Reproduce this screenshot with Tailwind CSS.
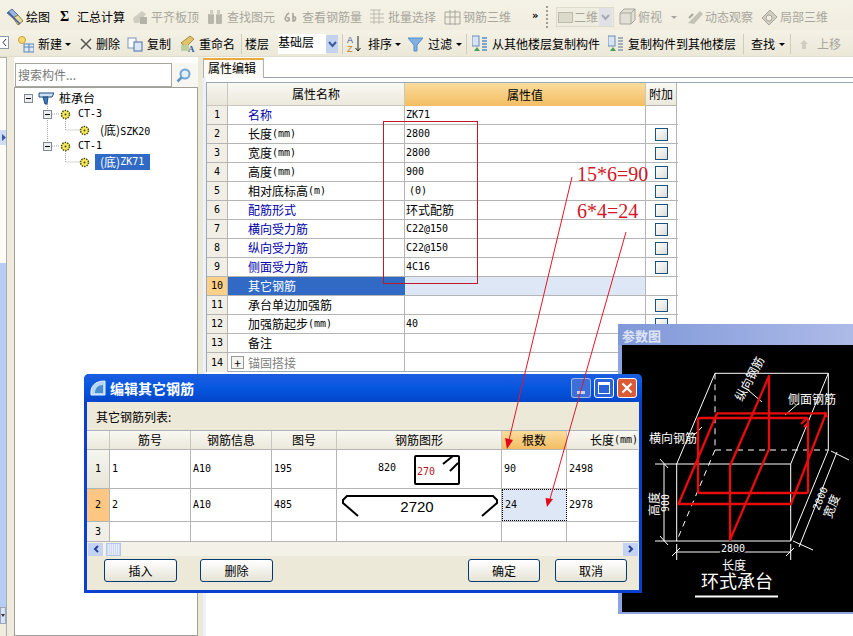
<!DOCTYPE html>
<html lang="zh">
<head>
<meta charset="utf-8">
<title>属性编辑</title>
<script src="https://cdn.jsdelivr.net/npm/@tailwindcss/browser@4"></script>
</head>
<body class="bg-white">
<div class="relative w-[853px] h-[636px] overflow-hidden bg-white text-[12px] leading-none text-black font-['Noto_Sans_CJK_SC',sans-serif] flex flex-col">

  <!-- toolbar 1 -->
  <div class="h-[30px] shrink-0 flex items-center bg-gradient-to-b from-[#f4f2e6] to-[#f1eee0] pt-[4px] whitespace-nowrap">
    <svg class="ml-[5px] w-[20px] h-[20px]" viewBox="0 0 20 20"><path d="M2 6l5-4 6 6-4 4z" fill="#9bb5dc" stroke="#56709c"/><path d="M8 11l5-3 5 6-5 4z" fill="#e8d9a0" stroke="#8a8050"/><path d="M3 5l12 12" stroke="#3d5c94" stroke-width="1.5"/></svg>
    <span class="ml-[1px] w-[24px]">绘图</span>
    <span class="ml-[10px] w-[10px] font-bold font-['Liberation_Serif',serif] text-[14px]">Σ</span>
    <span class="ml-[7px] w-[48px]">汇总计算</span>
    <svg class="ml-[7px] w-[16px] h-[16px]" viewBox="0 0 16 16"><path d="M1 9l9-7 4 3-7 9H2z" fill="#cfcdc2"/><rect x="8" y="8" width="7" height="7" fill="#b5b3a8"/></svg>
    <span class="ml-[3px] w-[48px] text-[#a8a69c]">平齐板顶</span>
    <svg class="ml-[8px] w-[16px] h-[16px]" viewBox="0 0 16 16"><rect x="1" y="5" width="6" height="10" rx="1" fill="#b9b7ac"/><rect x="9" y="5" width="6" height="10" rx="1" fill="#b9b7ac"/><rect x="3" y="1" width="3" height="5" fill="#cfcdc2"/><rect x="10" y="1" width="3" height="5" fill="#cfcdc2"/></svg>
    <span class="ml-[4px] w-[48px] text-[#a8a69c]">查找图元</span>
    <svg class="ml-[8px] w-[16px] h-[16px]" viewBox="0 0 16 16"><path d="M6 4C2 6 1 12 4 12s3-4 0-3M10 4v8c3 0 4-5 0-4" fill="none" stroke="#a8a69c" stroke-width="1.6"/></svg>
    <span class="ml-[3px] w-[60px] text-[#a8a69c]">查看钢筋量</span>
    <svg class="ml-[7px] w-[17px] h-[18px]" viewBox="0 0 17 18" fill="none" stroke="#bcbab0"><path d="M1 2h11M1 6h14M1 10h14M1 14h14M5 2v14M10 2v14"/></svg>
    <span class="ml-[2px] w-[48px] text-[#a8a69c]">批量选择</span>
    <svg class="ml-[8px] w-[17px] h-[17px]" viewBox="0 0 17 17" fill="none" stroke="#a8a69c"><path d="M1 3h15v12H1zM6 1v15M11 1v15M1 8h15"/></svg>
    <span class="ml-[2px] w-[48px] text-[#a8a69c]">钢筋三维</span>
    <span class="ml-[21px] w-[8px] font-bold text-[10px] font-['DejaVu_Sans',sans-serif] -mt-[3px]">»</span>
    <span class="ml-[6px] h-[22px] border-l-2 border-dotted border-[#a09e90]"></span>
    <div class="ml-[8px] w-[58px] h-[20px] flex items-center bg-[#efece0] border border-[#dedbcd]">
      <span class="ml-[1px] w-[15px] h-[11px] bg-[#dcdacb] border border-[#bcbaa9]"></span>
      <span class="ml-[1px] w-[25px] text-[#a8a69c]">二维</span>
      <span class="w-[13px] h-[18px] bg-[#dfe1e6] flex items-center justify-center"><svg class="w-[9px] h-[7px]" viewBox="0 0 9 7" fill="none" stroke="#a5a9b5" stroke-width="2"><path d="M1 1l3.5 4L8 1"/></svg></span>
    </div>
    <svg class="ml-[5px] w-[17px] h-[18px]" viewBox="0 0 17 18"><path d="M1 5l4-4h11v11l-4 4H1z" fill="#e2e0d4" stroke="#a8a69c"/><path d="M1 5h11v11M12 5l4-4" fill="none" stroke="#a8a69c"/></svg>
    <span class="ml-[2px] w-[28px] text-[#a8a69c]">俯视</span>
    <span class="ml-[5px] w-0 h-0 border-x-[3px] border-x-transparent border-t-[3px] border-t-[#a8a69c]"></span>
    <svg class="ml-[9px] w-[18px] h-[18px]" viewBox="0 0 18 18"><path d="M2 15L14 3l3 3-9 10z" fill="#c4c2b5"/><path d="M3 10l4-4" stroke="#a8a69c" stroke-width="2"/></svg>
    <span class="ml-[1px] w-[48px] text-[#a8a69c]">动态观察</span>
    <svg class="ml-[8px] w-[17px] h-[17px]" viewBox="0 0 17 17"><path d="M1 9l8-8 7 7-8 8z" fill="#d0cebf" stroke="#a8a69c"/><circle cx="8" cy="9" r="3" fill="#f0eee2" stroke="#a8a69c"/></svg>
    <span class="ml-[2px] w-[48px] text-[#a8a69c]">局部三维</span>
  </div>

  <!-- toolbar 2 -->
  <div class="h-[27px] shrink-0 flex items-center bg-gradient-to-b from-[#f4f2e6] to-[#ebe8d8] pt-[2px] whitespace-nowrap border-b border-[#e0ddcc]">
    <span class="w-[9px] h-[13px] -mt-[3px] bg-white border-y border-r border-[#8f9aa8] flex items-center justify-center"><svg class="w-[5px] h-[9px]" viewBox="0 0 5 9" fill="none" stroke="#333"><path d="M4 1L1 4.500 4 8"/></svg></span>
    <svg class="ml-[9px] w-[16px] h-[17px]" viewBox="0 0 16 17"><circle cx="4" cy="4" r="3.500" fill="#f7d86a" stroke="#c7a23a"/><rect x="6" y="8" width="10" height="8" fill="#dfe9f5" stroke="#5b86b8"/><path d="M6 11h10M11 8v8" stroke="#5b86b8"/></svg>
    <span class="ml-[4px] w-[24px]">新建</span>
    <span class="ml-[3px] w-0 h-0 border-x-[3px] border-x-transparent border-t-[3px] border-t-black"></span>
    <svg class="ml-[9px] w-[12px] h-[12px]" viewBox="0 0 12 12" fill="none" stroke="#555" stroke-width="1.500"><path d="M1 1l10 10M11 1L1 11"/></svg>
    <span class="ml-[4px] w-[24px]">删除</span>
    <svg class="ml-[7px] w-[16px] h-[15px]" viewBox="0 0 16 15"><rect x="1" y="1" width="8" height="10" fill="#fff" stroke="#7c94b8"/><rect x="7" y="5" width="8" height="9" fill="#dce7f6" stroke="#4a70a8"/></svg>
    <span class="ml-[4px] w-[24px]">复制</span>
    <svg class="ml-[9px] w-[16px] h-[18px]" viewBox="0 0 16 18"><path d="M1 8l9-7 4 3-8 8z" fill="#e3c36a" stroke="#a89048"/><path d="M1 16V10h8v6z" fill="#bcd0a0"/><text x="8" y="17" font-size="9" fill="#34609c" font-family="Liberation Serif" font-weight="700">A</text></svg>
    <span class="ml-[3px] w-[36px]">重命名</span>
    <span class="ml-[6px] w-px h-[20px] bg-[#cfccba]"></span>
    <span class="ml-[3px] w-[24px]">楼层</span>
    <div class="ml-[9px] flex items-center w-[60px] h-[20px]">
      <span class="w-[48px] h-[20px] bg-white pt-[2px] -mt-[1px]">基础层</span>
      <span class="w-[12px] h-[18px] bg-[#c3d3f1] flex items-center justify-center"><svg class="w-[9px] h-[7px]" viewBox="0 0 9 7" fill="none" stroke="#3a5aa0" stroke-width="2"><path d="M1 1l3.500 4L8 1"/></svg></span>
    </div>
    <span class="ml-[4px] w-px h-[20px] bg-[#cfccba]"></span>
    <svg class="ml-[4px] w-[16px] h-[18px]" viewBox="0 0 16 18"><text x="0" y="8" font-size="9" fill="#3a5aa0" font-family="Liberation Sans">A</text><text x="0" y="17" font-size="9" fill="#c08030" font-family="Liberation Sans">Z</text><path d="M11 1v15M8.500 13l2.500 3 2.500-3" fill="none" stroke="#222"/></svg>
    <span class="ml-[5px] w-[24px]">排序</span>
    <span class="ml-[3px] w-0 h-0 border-x-[3px] border-x-transparent border-t-[3px] border-t-black"></span>
    <svg class="ml-[7px] w-[15px] h-[15px]" viewBox="0 0 15 15"><path d="M0 1h15L9 8v6H6V8z" fill="#7eb2e6" stroke="#5a8cc2"/></svg>
    <span class="ml-[5px] w-[24px]">过滤</span>
    <span class="ml-[4px] w-0 h-0 border-x-[3px] border-x-transparent border-t-[3px] border-t-black"></span>
    <span class="ml-[4px] w-px h-[20px] bg-[#cfccba]"></span>
    <svg class="ml-[5px] w-[16px] h-[18px]" viewBox="0 0 16 18"><rect x="0" y="1" width="7" height="10" fill="#d8e4f4" stroke="#6a8cbc"/><path d="M2 16l3-4 3 4z" fill="#4aa050"/><path d="M10 3h5M10 6h5M10 9h5M10 12h5M10 15h5" stroke="#5a8cc8" stroke-width="1.500"/></svg>
    <span class="ml-[4px] w-[108px]">从其他楼层复制构件</span>
    <svg class="ml-[8px] w-[16px] h-[18px]" viewBox="0 0 16 18"><rect x="0" y="1" width="7" height="10" fill="#d8e4f4" stroke="#6a8cbc"/><path d="M2 16l3-4 3 4z" fill="#4aa050"/><path d="M10 3h5M10 6h5M10 9h5M10 12h5M10 15h5" stroke="#8a9cb0" stroke-width="1.500"/></svg>
    <span class="ml-[4px] w-[108px]">复制构件到其他楼层</span>
    <span class="ml-[7px] w-px h-[20px] bg-[#cfccba]"></span>
    <span class="ml-[7px] w-[24px]">查找</span>
    <span class="ml-[4px] w-0 h-0 border-x-[3px] border-x-transparent border-t-[3px] border-t-black"></span>
    <span class="ml-[5px] w-px h-[20px] bg-[#cfccba]"></span>
    <svg class="ml-[9px] w-[8px] h-[9px]" viewBox="0 0 8 9"><path d="M4 0l4 4H6v5H2V4H0z" fill="#cfcdc2"/></svg>
    <span class="ml-[9px] w-[24px] text-[#a8a69c]">上移</span>
  </div>

  <!-- body -->
  <div class="flex-1 flex min-h-0">
    <!-- far-left strip -->
    <div class="w-[14px] shrink-0 flex relative bg-[#efecdd]">
      <div class="w-[7px] flex flex-col border-r border-[#a9adb0] bg-[#fdfcf6]">
        <div class="h-[73px] border-t border-[#b8b6a8]"></div>
        <div class="h-[15px] bg-[#cfdcf7] flex items-center justify-end"><svg class="w-[4px] h-[7px]" viewBox="0 0 4 7"><path d="M0 0l4 3.500L0 7z" fill="#3a5aa0"/></svg></div>
        <div class="h-[118px]"></div>
        <div class="flex-1 bg-[#b8cdf3]"></div>
        <div class="h-[17px] bg-[#d9e3f6] border border-[#9aa6bb] flex items-center justify-center"><span class="w-0 h-0 border-x-[2px] border-x-transparent border-t-[3px] border-t-[#333]"></span></div>
        <div class="h-[12px] bg-[#efecdd]"></div>
      </div>
    </div>

    <!-- left panel -->
    <div class="w-[184px] shrink-0 flex flex-col pt-[6px]">
      <div class="h-[24px] flex shrink-0">
        <div class="ml-[1px] w-[157px] h-[24px] bg-white border border-[#a7a7a0] flex items-center pl-[2px] text-[#777]">搜索构件...</div>
        <div class="flex-1 flex items-center justify-center bg-[#f7f6f0] pr-[3px]"><svg class="w-[15px] h-[15px]" viewBox="0 0 15 15"><circle cx="9" cy="6" r="4.500" fill="#e4effa" stroke="#6ea5d8" stroke-width="2"/><path d="M5.500 9.500L1.500 13.500" stroke="#5e96cc" stroke-width="2.500"/></svg></div>
      </div>
      <div class="relative flex-1 border border-[#a0a09a] bg-white pt-[2px]">
        <svg class="absolute left-0 top-0 w-[90px] h-[90px]" viewBox="0 0 90 90" fill="none" stroke="#a8a8a8" stroke-dasharray="1 1"><path d="M32.500 16V54M37 26h8M37 58h8M50.500 31v11h14M50.500 63v11h14"/></svg>
        <div class="relative h-[16px] flex items-center whitespace-nowrap">
          <span class="ml-[9px] w-[9px] h-[9px] border border-[#7f8a94] bg-[#eee] flex items-center justify-center"><span class="w-[5px] h-px bg-black"></span></span>
          <svg class="ml-[5px] w-[16px] h-[16px]" viewBox="0 0 16 16"><path d="M1 3h15l-2 4H1z" fill="#cfe0f4" stroke="#1f4d80"/><path d="M5 7h5l-1 7H7z" fill="#3c7cc0" stroke="#1f4d80"/></svg>
          <span class="ml-[5px]">桩承台</span>
        </div>
        <div class="relative h-[16px] flex items-center whitespace-nowrap">
          <span class="ml-[28px] w-[9px] h-[9px] border border-[#7f8a94] bg-[#eee] flex items-center justify-center"><span class="w-[5px] h-px bg-black"></span></span>
          <svg class="ml-[8px] w-[11px] h-[11px]" viewBox="0 0 11 11"><circle cx="5.500" cy="5.500" r="4" fill="#f5e85a" stroke="#4a4a10" stroke-width="1.500" stroke-dasharray="1.500 1"/><circle cx="5.500" cy="5.500" r="1" fill="#4a4a10"/></svg>
          <span class="ml-[7px] text-[10px] font-['DejaVu_Sans_Mono',monospace]">CT-3</span>
        </div>
        <div class="relative h-[16px] flex items-center whitespace-nowrap">
          <svg class="ml-[64px] w-[11px] h-[11px]" viewBox="0 0 11 11"><circle cx="5.500" cy="5.500" r="4" fill="#f5e85a" stroke="#4a4a10" stroke-width="1.500" stroke-dasharray="1.500 1"/><circle cx="5.500" cy="5.500" r="1" fill="#4a4a10"/></svg>
          <span class="ml-[10px]">(底)<span class="text-[10px] font-['DejaVu_Sans_Mono',monospace]">SZK20</span></span>
        </div>
        <div class="relative h-[16px] flex items-center whitespace-nowrap">
          <span class="ml-[28px] w-[9px] h-[9px] border border-[#7f8a94] bg-[#eee] flex items-center justify-center"><span class="w-[5px] h-px bg-black"></span></span>
          <svg class="ml-[8px] w-[11px] h-[11px]" viewBox="0 0 11 11"><circle cx="5.500" cy="5.500" r="4" fill="#f5e85a" stroke="#4a4a10" stroke-width="1.500" stroke-dasharray="1.500 1"/><circle cx="5.500" cy="5.500" r="1" fill="#4a4a10"/></svg>
          <span class="ml-[7px] text-[10px] font-['DejaVu_Sans_Mono',monospace]">CT-1</span>
        </div>
        <div class="relative h-[16px] flex items-center whitespace-nowrap">
          <svg class="ml-[64px] w-[11px] h-[11px]" viewBox="0 0 11 11"><circle cx="5.500" cy="5.500" r="4" fill="#f5e85a" stroke="#4a4a10" stroke-width="1.500" stroke-dasharray="1.500 1"/><circle cx="5.500" cy="5.500" r="1" fill="#4a4a10"/></svg>
          <span class="ml-[5px] w-[55px] h-[16px] pl-[5px] bg-[#316ac5] text-white flex items-center">(底)<span class="text-[10px] font-['DejaVu_Sans_Mono',monospace]">ZK71</span></span>
        </div>
      </div>
    </div>

    <!-- splitter -->
    <div class="w-[8px] shrink-0 bg-[#ece9d8] border-r-[3px] border-r-[#eef1fa]"></div>

    <!-- main -->
    <div class="flex-1 min-w-0 flex flex-col">
      <div class="h-[25px] shrink-0 flex items-start pt-[1px] bg-white">
        <div class="w-[61px] h-[20px] -ml-[3px] border-t-2 border-t-[#eaa93e] border-x border-x-[#aab2ba] bg-[#faf9f3] pl-[4px] pt-[2px] text-[12px]">属性编辑</div>
        <div class="flex-1 h-[20px] border-b border-[#9aa3ad]"></div>
      </div>
      <div class="h-[290px] shrink-0 border-t border-l border-b border-[#9aa9b8]">
        <div class="w-[471px]">
          <!-- header -->
          <div class="flex h-[23px]">
            <div class="w-[21px] border-r border-b border-[#c8c8c0] bg-gradient-to-b from-[#f7f6ef] to-[#e9e6d9]"></div>
            <div class="w-[177px] border-r border-b border-[#c8c8c0] bg-gradient-to-b from-[#faf9f3] to-[#ece9dc] flex items-center justify-center">属性名称</div>
            <div class="w-[241px] border-r border-[#c8c8c0] bg-gradient-to-b from-[#fbdc9c] to-[#f3bd62] flex items-center justify-center">属性值</div>
            <div class="w-[31px] border-r border-b border-[#b5b5b5] bg-gradient-to-b from-[#faf9f3] to-[#ece9dc] flex items-center justify-center">附加</div>
          </div>
          <!-- rows -->
          <div class="flex h-[19px] border-b border-[#b5b5b5]"><div class="w-[21px] border-r border-[#b5b5b5] bg-[#f1efe5] flex items-center justify-center text-[10px] font-['DejaVu_Sans_Mono',monospace]">1</div><div class="w-[177px] border-r border-[#b5b5b5] pl-[20px] flex items-center text-[#0000a8]">名称</div><div class="w-[241px] border-r border-[#b5b5b5] pl-[1px] flex items-center text-[10px] font-['DejaVu_Sans_Mono',monospace]">ZK71</div><div class="w-[31px] border-r border-[#b5b5b5]"></div></div>
          <div class="flex h-[19px] border-b border-[#b5b5b5]"><div class="w-[21px] border-r border-[#b5b5b5] bg-[#f1efe5] flex items-center justify-center text-[10px] font-['DejaVu_Sans_Mono',monospace]">2</div><div class="w-[177px] border-r border-[#b5b5b5] pl-[20px] flex items-center">长度<span class="text-[10px] font-['DejaVu_Sans_Mono',monospace]">(mm)</span></div><div class="w-[241px] border-r border-[#b5b5b5] pl-[1px] flex items-center text-[10px] font-['DejaVu_Sans_Mono',monospace]">2800</div><div class="w-[31px] border-r border-[#b5b5b5] flex items-center justify-center"><span class="w-[13px] h-[13px] border border-[#1c5180] bg-gradient-to-br from-white to-[#dcdcd7]"></span></div></div>
          <div class="flex h-[19px] border-b border-[#b5b5b5]"><div class="w-[21px] border-r border-[#b5b5b5] bg-[#f1efe5] flex items-center justify-center text-[10px] font-['DejaVu_Sans_Mono',monospace]">3</div><div class="w-[177px] border-r border-[#b5b5b5] pl-[20px] flex items-center">宽度<span class="text-[10px] font-['DejaVu_Sans_Mono',monospace]">(mm)</span></div><div class="w-[241px] border-r border-[#b5b5b5] pl-[1px] flex items-center text-[10px] font-['DejaVu_Sans_Mono',monospace]">2800</div><div class="w-[31px] border-r border-[#b5b5b5] flex items-center justify-center"><span class="w-[13px] h-[13px] border border-[#1c5180] bg-gradient-to-br from-white to-[#dcdcd7]"></span></div></div>
          <div class="flex h-[19px] border-b border-[#b5b5b5]"><div class="w-[21px] border-r border-[#b5b5b5] bg-[#f1efe5] flex items-center justify-center text-[10px] font-['DejaVu_Sans_Mono',monospace]">4</div><div class="w-[177px] border-r border-[#b5b5b5] pl-[20px] flex items-center">高度<span class="text-[10px] font-['DejaVu_Sans_Mono',monospace]">(mm)</span></div><div class="w-[241px] border-r border-[#b5b5b5] pl-[1px] flex items-center text-[10px] font-['DejaVu_Sans_Mono',monospace]">900</div><div class="w-[31px] border-r border-[#b5b5b5] flex items-center justify-center"><span class="w-[13px] h-[13px] border border-[#1c5180] bg-gradient-to-br from-white to-[#dcdcd7]"></span></div></div>
          <div class="flex h-[19px] border-b border-[#b5b5b5]"><div class="w-[21px] border-r border-[#b5b5b5] bg-[#f1efe5] flex items-center justify-center text-[10px] font-['DejaVu_Sans_Mono',monospace]">5</div><div class="w-[177px] border-r border-[#b5b5b5] pl-[20px] flex items-center">相对底标高<span class="text-[10px] font-['DejaVu_Sans_Mono',monospace]">(m)</span></div><div class="w-[241px] border-r border-[#b5b5b5] pl-[4px] flex items-center text-[10px] font-['DejaVu_Sans_Mono',monospace]">(0)</div><div class="w-[31px] border-r border-[#b5b5b5] flex items-center justify-center"><span class="w-[13px] h-[13px] border border-[#1c5180] bg-gradient-to-br from-white to-[#dcdcd7]"></span></div></div>
          <div class="flex h-[19px] border-b border-[#b5b5b5]"><div class="w-[21px] border-r border-[#b5b5b5] bg-[#f1efe5] flex items-center justify-center text-[10px] font-['DejaVu_Sans_Mono',monospace]">6</div><div class="w-[177px] border-r border-[#b5b5b5] pl-[20px] flex items-center text-[#0000a8]">配筋形式</div><div class="w-[241px] border-r border-[#b5b5b5] pl-[1px] flex items-center">环式配筋</div><div class="w-[31px] border-r border-[#b5b5b5] flex items-center justify-center"><span class="w-[13px] h-[13px] border border-[#1c5180] bg-gradient-to-br from-white to-[#dcdcd7]"></span></div></div>
          <div class="flex h-[19px] border-b border-[#b5b5b5]"><div class="w-[21px] border-r border-[#b5b5b5] bg-[#f1efe5] flex items-center justify-center text-[10px] font-['DejaVu_Sans_Mono',monospace]">7</div><div class="w-[177px] border-r border-[#b5b5b5] pl-[20px] flex items-center text-[#0000a8]">横向受力筋</div><div class="w-[241px] border-r border-[#b5b5b5] pl-[1px] flex items-center text-[10px] font-['DejaVu_Sans_Mono',monospace]">C22@150</div><div class="w-[31px] border-r border-[#b5b5b5] flex items-center justify-center"><span class="w-[13px] h-[13px] border border-[#1c5180] bg-gradient-to-br from-white to-[#dcdcd7]"></span></div></div>
          <div class="flex h-[19px] border-b border-[#b5b5b5]"><div class="w-[21px] border-r border-[#b5b5b5] bg-[#f1efe5] flex items-center justify-center text-[10px] font-['DejaVu_Sans_Mono',monospace]">8</div><div class="w-[177px] border-r border-[#b5b5b5] pl-[20px] flex items-center text-[#0000a8]">纵向受力筋</div><div class="w-[241px] border-r border-[#b5b5b5] pl-[1px] flex items-center text-[10px] font-['DejaVu_Sans_Mono',monospace]">C22@150</div><div class="w-[31px] border-r border-[#b5b5b5] flex items-center justify-center"><span class="w-[13px] h-[13px] border border-[#1c5180] bg-gradient-to-br from-white to-[#dcdcd7]"></span></div></div>
          <div class="flex h-[19px] border-b border-[#b5b5b5]"><div class="w-[21px] border-r border-[#b5b5b5] bg-[#f1efe5] flex items-center justify-center text-[10px] font-['DejaVu_Sans_Mono',monospace]">9</div><div class="w-[177px] border-r border-[#b5b5b5] pl-[20px] flex items-center text-[#0000a8]">侧面受力筋</div><div class="w-[241px] border-r border-[#b5b5b5] pl-[1px] flex items-center text-[10px] font-['DejaVu_Sans_Mono',monospace]">4C16</div><div class="w-[31px] border-r border-[#b5b5b5] flex items-center justify-center"><span class="w-[13px] h-[13px] border border-[#1c5180] bg-gradient-to-br from-white to-[#dcdcd7]"></span></div></div>
          <div class="flex h-[19px] border-b border-[#b5b5b5]"><div class="w-[21px] border-r border-[#b5b5b5] bg-[#fdd08a] flex items-center justify-center text-[10px] font-['DejaVu_Sans_Mono',monospace]">10</div><div class="w-[177px] border-r border-[#316ac5] bg-[#316ac5] text-white pl-[20px] flex items-center">其它钢筋</div><div class="w-[241px] border-r border-[#b5b5b5] bg-[#dde7f5]"></div><div class="w-[31px] border-r border-[#b5b5b5]"></div></div>
          <div class="flex h-[19px] border-b border-[#b5b5b5]"><div class="w-[21px] border-r border-[#b5b5b5] bg-[#f1efe5] flex items-center justify-center text-[10px] font-['DejaVu_Sans_Mono',monospace]">11</div><div class="w-[177px] border-r border-[#b5b5b5] pl-[20px] flex items-center">承台单边加强筋</div><div class="w-[241px] border-r border-[#b5b5b5]"></div><div class="w-[31px] border-r border-[#b5b5b5] flex items-center justify-center"><span class="w-[13px] h-[13px] border border-[#1c5180] bg-gradient-to-br from-white to-[#dcdcd7]"></span></div></div>
          <div class="flex h-[19px] border-b border-[#b5b5b5]"><div class="w-[21px] border-r border-[#b5b5b5] bg-[#f1efe5] flex items-center justify-center text-[10px] font-['DejaVu_Sans_Mono',monospace]">12</div><div class="w-[177px] border-r border-[#b5b5b5] pl-[20px] flex items-center">加强筋起步<span class="text-[10px] font-['DejaVu_Sans_Mono',monospace]">(mm)</span></div><div class="w-[241px] border-r border-[#b5b5b5] pl-[1px] flex items-center text-[10px] font-['DejaVu_Sans_Mono',monospace]">40</div><div class="w-[31px] border-r border-[#b5b5b5] flex items-center justify-center"><span class="w-[13px] h-[13px] border border-[#1c5180] bg-gradient-to-br from-white to-[#dcdcd7]"></span></div></div>
          <div class="flex h-[19px] border-b border-[#b5b5b5]"><div class="w-[21px] border-r border-[#b5b5b5] bg-[#f1efe5] flex items-center justify-center text-[10px] font-['DejaVu_Sans_Mono',monospace]">13</div><div class="w-[177px] border-r border-[#b5b5b5] pl-[20px] flex items-center">备注</div><div class="w-[241px] border-r border-[#b5b5b5]"></div><div class="w-[31px] border-r border-[#b5b5b5]"></div></div>
          <div class="flex h-[19px]"><div class="w-[21px] border-r border-[#b5b5b5] bg-[#f1efe5] flex items-center justify-center text-[10px] font-['DejaVu_Sans_Mono',monospace]">14</div><div class="w-[177px] border-r border-[#b5b5b5] pl-[3px] flex items-center text-[#808080]"><span class="w-[13px] h-[13px] mr-[4px] border border-[#999] text-black flex items-center justify-center text-[12px] bg-[#f5f5f0]">+</span>锚固搭接</div><div class="w-[241px] border-r border-[#b5b5b5]"></div><div class="w-[31px] border-r border-[#b5b5b5]"></div></div>
        </div>
      </div>
    </div>
  </div>

  <!-- annotation labels -->
  <div class="absolute left-[577px] top-[164px] text-[20px] text-[#d01828] font-['Liberation_Serif',serif]">15*6=90</div>
  <div class="absolute left-[577px] top-[201px] text-[20px] text-[#d01828] font-['Liberation_Serif',serif]">6*4=24</div>

  <!-- parameter diagram window -->
  <div class="absolute left-[618px] top-[324px] w-[240px] h-[290px] bg-[#8fa3de] flex flex-col">
    <div class="h-[21px] shrink-0 pl-[4px] pt-[2px] flex items-center text-[13px] font-bold text-[#dfe4f5] bg-gradient-to-r from-[#7f98d8] to-[#aebbe8]">参数图</div>
    <div class="ml-[4px] flex-1 bg-black mb-[2px]">
      <svg class="w-[236px] h-[267px]" viewBox="622 345 236 267">
        <g fill="none" stroke="#fff" stroke-width="1">
          <path d="M676.700 464h114v77h-114zM676.700 464L715 373.300h113.300L790.700 464M828.300 373.300v76.700L790.700 541"/>
          <path d="M715 373.300v76.700M715 450h113.300M715 450l-38.300 91" stroke-dasharray="6 5"/>
          <path d="M655 464h22M655 541h22M664 464v77M660 536l8 9M660 459l8 9"/>
          <path d="M676.700 544v16M790.700 544v16M676.700 552h114M672 556l8-8M786 556l8-8"/>
          <path d="M793 541l20 9M831 451l18 9M837 452l-38 95"/>
          <path d="M785 415l14-12M762 402l-14-12M702 427l-8 8"/>
        </g>
        <g fill="none" stroke="#e80c0c" stroke-width="2.300" stroke-linejoin="round">
          <rect x="698" y="418" width="110" height="75" rx="2"/>
          <path d="M717 413.300h109l-35 90.700H678.500z"/>
          <path d="M769 376v73l-39 91v-74z"/>
          <path d="M806 419l-5 5M808 423l-4 4M824 412l3 5"/>
        </g>
        <g fill="#fff" font-family="Noto Sans CJK SC, sans-serif" font-size="12">
          <text x="649" y="443">横向钢筋</text>
          <text x="788" y="404">侧面钢筋</text>
          <text transform="translate(742 402) rotate(-62)">纵向钢筋</text>
          <text transform="translate(659 516) rotate(-90)">高度</text>
          <text transform="translate(669 512) rotate(-90)" font-size="10" font-family="DejaVu Sans Mono, monospace">900</text>
          <text x="721" y="552" font-size="10" font-family="DejaVu Sans Mono, monospace" stroke="#000" stroke-width="3" paint-order="stroke">2800</text>
          <text x="722" y="570">长度</text>
          <text transform="translate(819 511) rotate(-68)" font-size="10" font-family="DejaVu Sans Mono, monospace">2800</text>
          <text transform="translate(831 519) rotate(-68)">宽度</text>
          <text x="701" y="588" font-size="18">环式承台</text>
        </g>
        <path d="M695 596.500h83" stroke="#fff" stroke-width="2"/>
      </svg>
    </div>
  </div>

  <!-- dialog -->
  <div class="absolute left-[84px] top-[374px] w-[558px] h-[219px] rounded-t-[5px] bg-[#0a3fd0] px-[3px] pb-[3px] flex flex-col">
    <div class="h-[28px] shrink-0 flex items-center bg-gradient-to-b from-[#1a5de0] via-[#0656e0] to-[#0446c8] -mx-[3px] px-[6px] rounded-t-[5px]">
      <svg class="w-[17px] h-[17px]" viewBox="0 0 17 17"><path d="M1 15C0 6 5 1 15 1v14z" fill="#b8d6f4" stroke="#e8f2fc"/><path d="M5 13c0-5 3-8 8-8v8z" fill="#4b8cd0"/></svg>
      <span class="ml-[3px] text-[14px] font-bold text-white">编辑其它钢筋</span>
      <div class="ml-auto flex gap-[3px] mr-[-1px]">
        <span class="w-[20px] h-[20px] rounded-[3px] border border-white/50 bg-[#3c6fd8] flex items-end justify-center pb-[3px]"><span class="w-[8px] h-[3px] bg-white/70"></span></span>
        <span class="w-[20px] h-[20px] rounded-[3px] border border-white bg-[#2a62dc] flex items-center justify-center"><span class="w-[12px] h-[12px] border border-white border-t-[3px]"></span></span>
        <span class="w-[20px] h-[20px] rounded-[3px] border border-white bg-[#dc5a34] flex items-center justify-center"><svg class="w-[12px] h-[12px]" viewBox="0 0 12 12" fill="none" stroke="#fff" stroke-width="2.200"><path d="M1.500 1.500l9 9M10.500 1.500l-9 9"/></svg></span>
      </div>
    </div>
    <div class="flex-1 min-h-0 bg-[#ece9d8] flex flex-col overflow-hidden">
      <div class="h-[28px] shrink-0 pl-[9px] pt-[9px]">其它钢筋列表:</div>
      <!-- grid -->
      <div class="w-[551px] h-[111px] shrink-0 border-t border-[#aab2bb] bg-white overflow-hidden">
        <div class="flex h-[19px] border-b border-[#b5b5b5] bg-gradient-to-b from-[#f9f8f2] to-[#ebe8db]">
          <div class="w-[23px] border-r border-[#c8c8c0]"></div>
          <div class="w-[81px] border-r border-[#c8c8c0] flex items-center justify-center">筋号</div>
          <div class="w-[81px] border-r border-[#c8c8c0] flex items-center justify-center">钢筋信息</div>
          <div class="w-[65px] border-r border-[#c8c8c0] flex items-center justify-center">图号</div>
          <div class="w-[165px] border-r border-[#c8c8c0] flex items-center justify-center">钢筋图形</div>
          <div class="w-[65px] border-r border-[#c8c8c0] bg-gradient-to-b from-[#fbdc9c] to-[#f3bd62] flex items-center justify-center">根数</div>
          <div class="flex-1 flex items-center justify-end whitespace-nowrap">长度<span class="text-[10px] font-['DejaVu_Sans_Mono',monospace]">(mm)</span></div>
        </div>
        <div class="flex h-[39px] border-b border-[#b5b5b5] text-[10px] font-['DejaVu_Sans_Mono',monospace]">
          <div class="w-[23px] border-r border-[#b5b5b5] bg-gradient-to-b from-[#f6f5ee] to-[#e8e5d8] flex items-center justify-center">1</div>
          <div class="w-[81px] border-r border-[#b5b5b5] pl-[2px] flex items-center">1</div>
          <div class="w-[81px] border-r border-[#b5b5b5] pl-[2px] flex items-center">A10</div>
          <div class="w-[65px] border-r border-[#b5b5b5] pl-[2px] flex items-center">195</div>
          <div class="relative w-[165px] border-r border-[#b5b5b5]">
            <span class="absolute left-[41px] top-[13px]">820</span>
            <svg class="absolute left-[77px] top-[5px] w-[47px] h-[30px]" viewBox="0 0 47 30" fill="none" stroke="#000" stroke-width="2"><rect x="1" y="1" width="44" height="28" rx="1"/><path d="M29 9l10-8M36 16l8-8"/></svg>
            <span class="absolute left-[80px] top-[17px] text-[#b01828]">270</span>
          </div>
          <div class="w-[65px] border-r border-[#b5b5b5] pl-[2px] flex items-center">90</div>
          <div class="flex-1 pl-[2px] flex items-center">2498</div>
        </div>
        <div class="flex h-[33px] border-b border-[#b5b5b5] text-[10px] font-['DejaVu_Sans_Mono',monospace]">
          <div class="w-[23px] border-r border-[#b5b5b5] bg-[#fdc683] flex items-center justify-center">2</div>
          <div class="w-[81px] border-r border-[#b5b5b5] pl-[2px] flex items-center">2</div>
          <div class="w-[81px] border-r border-[#b5b5b5] pl-[2px] flex items-center">A10</div>
          <div class="w-[65px] border-r border-[#b5b5b5] pl-[2px] flex items-center">485</div>
          <div class="relative w-[165px] border-r border-[#b5b5b5]">
            <svg class="absolute left-0 top-[2px] w-[164px] h-[28px]" viewBox="0 0 164 28" fill="none" stroke="#000" stroke-width="2"><path d="M21 25L6 12v-3l4-4h146l4 4v3L145 25"/></svg>
            <span class="absolute left-0 w-[160px] text-center top-[10px] text-[15px] font-['Liberation_Sans',sans-serif]">2720</span>
          </div>
          <div class="w-[65px] border border-dotted border-black bg-[#dde7f5] pl-[2px] flex items-center">24</div>
          <div class="flex-1 pl-[2px] flex items-center">2978</div>
        </div>
        <div class="flex h-[19px]">
          <div class="w-[23px] border-r border-[#b5b5b5] bg-[#f1efe5] flex items-center justify-center text-[10px] font-['DejaVu_Sans_Mono',monospace]">3</div>
          <div class="w-[81px] border-r border-[#b5b5b5]"></div>
          <div class="w-[81px] border-r border-[#b5b5b5]"></div>
          <div class="w-[65px] border-r border-[#b5b5b5]"></div>
          <div class="w-[165px] border-r border-[#b5b5b5]"></div>
          <div class="w-[65px] border-r border-[#b5b5b5]"></div>
          <div class="flex-1"></div>
        </div>
      </div>
      <!-- scrollbar -->
      <div class="h-[15px] shrink-0 border-t border-[#b5b5b5] bg-[#f4f2e8] flex items-center">
        <span class="ml-px w-[15px] h-[13px] bg-[#c4d3f2] flex items-center justify-center"><svg class="w-[6px] h-[8px]" viewBox="0 0 6 8" fill="none" stroke="#26409a" stroke-width="2"><path d="M5 1L2 4l3 3"/></svg></span>
        <span class="ml-[3px] w-[15px] h-[13px] bg-[repeating-linear-gradient(90deg,#cdd8f2_0,#cdd8f2_1px,#e6ecfa_1px,#e6ecfa_2px)] border border-[#b6c6ea]"></span>
        <span class="ml-auto mr-px w-[15px] h-[13px] bg-[#c4d3f2] flex items-center justify-center"><svg class="w-[6px] h-[8px]" viewBox="0 0 6 8" fill="none" stroke="#26409a" stroke-width="2"><path d="M1 1l3 3-3 3"/></svg></span>
      </div>
      <!-- buttons -->
      <div class="flex-1 flex items-start pt-[3px] pl-[17px]">
        <button class="w-[73px] h-[23px] rounded-[3px] border border-[#003c74] bg-gradient-to-b from-white to-[#e6e3d6]">插入</button>
        <button class="ml-[23px] w-[73px] h-[23px] rounded-[3px] border border-[#003c74] bg-gradient-to-b from-white to-[#e6e3d6]">删除</button>
        <button class="ml-[195px] w-[72px] h-[23px] rounded-[3px] border border-[#003c74] bg-gradient-to-b from-white to-[#e6e3d6]">确定</button>
        <button class="ml-[15px] w-[72px] h-[23px] rounded-[3px] border border-[#003c74] bg-gradient-to-b from-white to-[#e6e3d6]">取消</button>
      </div>
    </div>
  </div>

  <!-- annotation box and arrows over everything -->
  <svg class="absolute left-0 top-0 w-[853px] h-[636px] pointer-events-none" viewBox="0 0 853 636">
    <rect x="383.500" y="121.500" width="94" height="162" fill="none" stroke="#c01828" stroke-width="1"/>
    <path d="M572 177L509 440M626 232L550 499" fill="none" stroke="#e01828" stroke-width="1"/>
    <path d="M507 449L505 438L513 440z" fill="#e00818"/>
    <path d="M547 507L545.500 498L553 499z" fill="#e00818"/>
  </svg>
</div>
</body>
</html>
